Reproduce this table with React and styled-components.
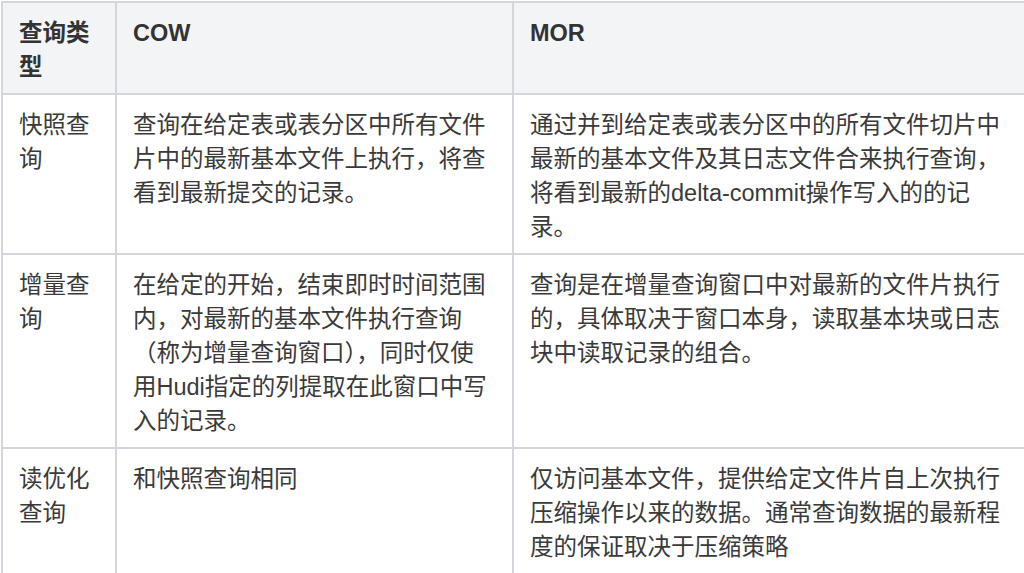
import React from 'react';
import styled, { createGlobalStyle } from 'styled-components';

// # GLOBAL
const GlobalStyle = createGlobalStyle`
    html, body {
        margin: 0;
        padding: 0;
        background: #ffffff;
        overflow: hidden;
    }
    body {
        font-family: "Liberation Sans", "Noto Sans CJK SC", sans-serif;
        color: #333333;
    }
`;

// # STYLED
const Page = styled.div`
    width: 1024px;
    height: 573px;
    overflow: hidden;
    padding-top: 1px;
    box-sizing: border-box;
`;
const Table = styled.table`
    border-collapse: collapse;
    table-layout: fixed;
    width: 1031px;
    margin-left: 1px;
    font-size: 23.5px;
    line-height: 34px;
`;
const Col = styled.col`
    width: ${props => props.w}px;
`;
const HeadRow = styled.tr`
    background: #f3f4f6;
`;
const HeadCell = styled.th`
    border: 2px solid #d3d6dd;
    padding: 13px 18px 9px 16px;
    text-align: left;
    vertical-align: top;
    font-weight: 700;
    color: #333333;
`;
const Cell = styled.td`
    border: 2px solid #d3d6dd;
    padding: 13px 18px ${props => (props.open ? 40 : 9)}px 16px;
    vertical-align: top;
    color: #3a3a3a;
    line-break: strict;
`;

const rows = [
    {
        type: '快照查询',
        cow: '查询在给定表或表分区中所有文件片中的最新基本文件上执行，将查看到最新提交的记录。',
        mor: '通过并到给定表或表分区中的所有文件切片中最新的基本文件及其日志文件合来执行查询，将看到最新的delta-commit操作写入的的记录。'
    },
    {
        type: '增量查询',
        cow: '在给定的开始，结束即时时间范围内，对最新的基本文件执行查询（称为增量查询窗口），同时仅使用Hudi指定的列提取在此窗口中写入的记录。',
        mor: '查询是在增量查询窗口中对最新的文件片执行的，具体取决于窗口本身，读取基本块或日志块中读取记录的组合。'
    },
    {
        type: '读优化查询',
        cow: '和快照查询相同',
        mor: '仅访问基本文件，提供给定文件片自上次执行压缩操作以来的数据。通常查询数据的最新程度的保证取决于压缩策略'
    }
];

// # COMPONENT
export default function App() {
    return (
        <Page>
            <GlobalStyle />
            <Table>
                <colgroup>
                    <Col w={114} />
                    <Col w={397} />
                    <Col w={520} />
                </colgroup>
                <thead>
                    <HeadRow>
                        <HeadCell>查询类型</HeadCell>
                        <HeadCell>COW</HeadCell>
                        <HeadCell>MOR</HeadCell>
                    </HeadRow>
                </thead>
                <tbody>
                    {rows.map((row, i) => {
                        const open = i === rows.length - 1;
                        return (
                            <tr key={row.type}>
                                <Cell open={open}>{row.type}</Cell>
                                <Cell open={open}>{row.cow}</Cell>
                                <Cell open={open}>{row.mor}</Cell>
                            </tr>
                        );
                    })}
                </tbody>
            </Table>
        </Page>
    );
}
